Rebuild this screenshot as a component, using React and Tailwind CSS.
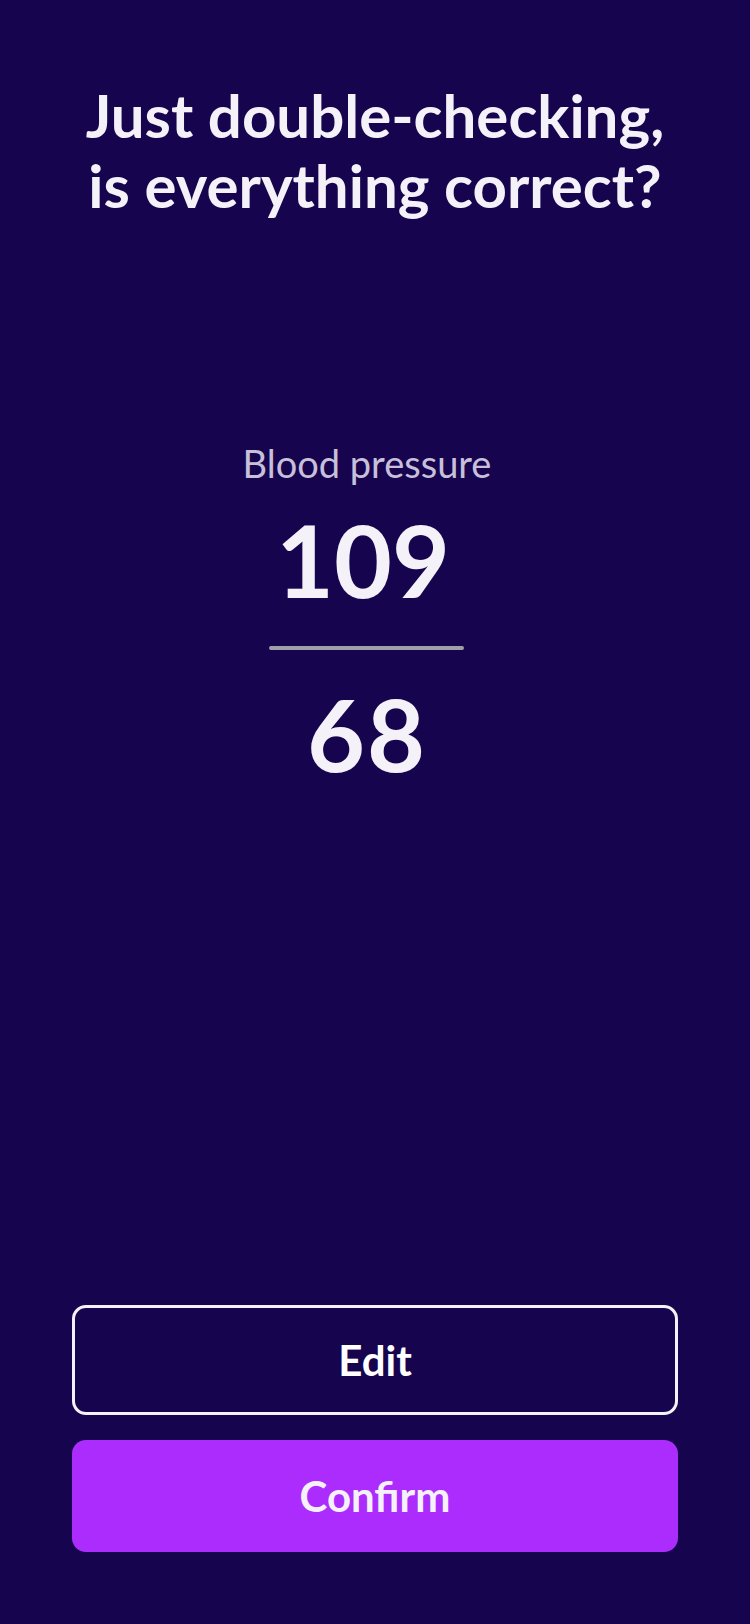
export default function App() {
    return (
        <div
            className="min-h-screen w-full bg-[#16054e] flex flex-col items-center text-[#f4f2f8]"
            style={{ fontFamily: "Lato, 'Noto Sans', sans-serif" }}
        >
            {/* heading */}
            <h1 className="pt-[80px] text-center text-[60px] leading-[70px] font-bold">
                Just double-checking,
                <br />
                is everything correct?
            </h1>

            {/* reading */}
            <div className="mt-[220px] pr-[16px] flex flex-col items-center">
                <p className="text-[38px] leading-[46px] text-[#c8c0da]">Blood pressure</p>
                <p className="mt-[23px] pr-[8px] text-[100px] leading-[100px] font-bold">109</p>
                <div className="mt-[37px] w-[195px] h-[4px] rounded-full bg-[#a19ea9]" />
                <p className="mt-[33px] text-[100px] leading-[100px] font-bold tracking-[2px]">68</p>
            </div>

            <div className="flex-1" />

            {/* actions */}
            <div className="w-full px-[72px] pb-[72px] flex flex-col gap-[25px]">
                <button className="h-[110px] w-full rounded-[14px] border-[3px] border-[#f4f2f8] text-[42px] font-bold text-white">
                    Edit
                </button>
                <button className="h-[112px] w-full rounded-[14px] bg-[#ac2cfe] text-[42px] font-bold text-[#f4f2f8]">
                    Confirm
                </button>
            </div>
        </div>
    );
}
